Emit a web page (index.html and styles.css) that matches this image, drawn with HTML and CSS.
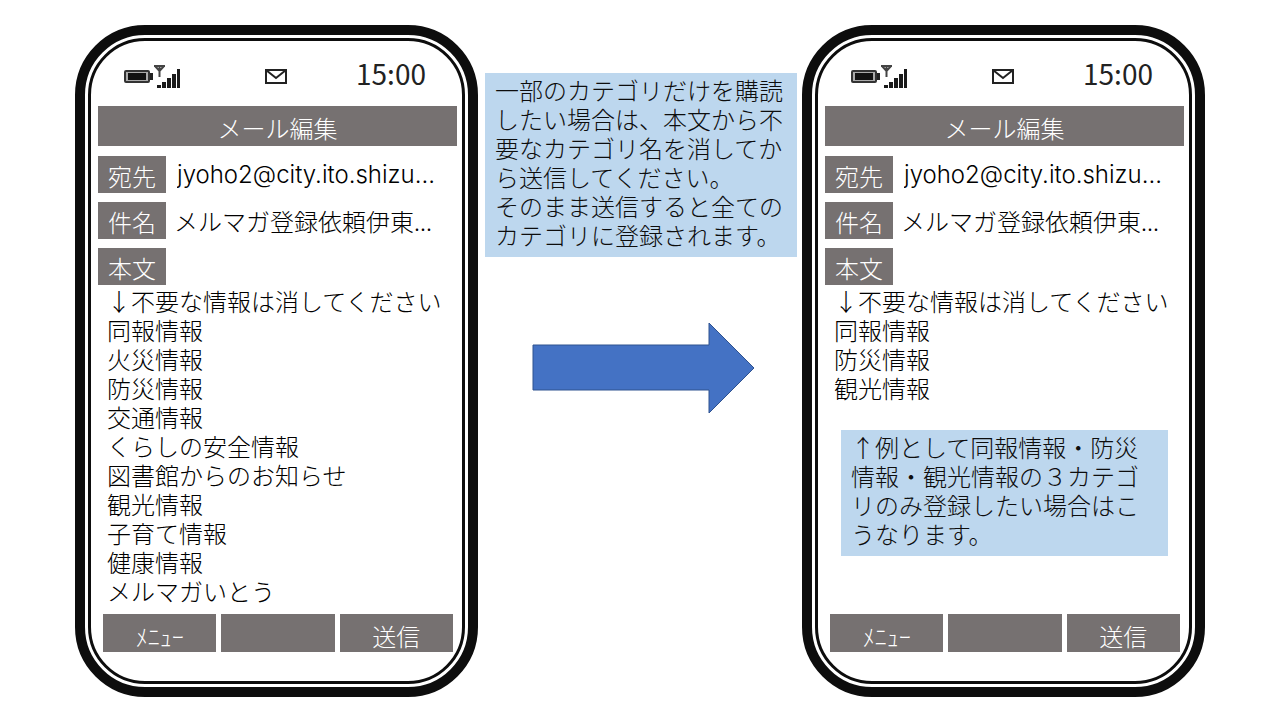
FILE: index.html
```
<!DOCTYPE html>
<html lang="ja">

<head>
    <title>メール編集</title>
    <meta charset="UTF-8" />
    <link rel="stylesheet" href="styles.css">
</head>

<body>
    <!-- icons used by both phones -->
    <svg class="defs" aria-hidden="true">
        <symbol id="signal" viewBox="0 0 57 25">
            <rect x="1" y="7" width="24" height="11" rx="1" fill="#aaa" stroke="#333" stroke-width="2" />
            <rect x="4" y="9" width="18" height="7" fill="#111" />
            <rect x="26" y="9" width="3" height="7" fill="#222" />
            <path d="M30 2h11M31 2l4.500 5 4.500-5M35.500 2v11" fill="none" stroke="#444" stroke-width="2" />
            <path d="M33 21h4v3h-4zM38 18h4v6h-4zM43 14h4v10h-4zM48 10h4v14h-4zM53 5h3v19h-3z" fill="#1a1a1a" />
        </symbol>
        <symbol id="envelope" viewBox="0 0 24 17">
            <path d="M2 2h20v13H2zM2 2l10 8 10-8" fill="none" stroke="#222" stroke-width="2" />
        </symbol>
    </svg>

    <main>
        <section class="phone">
            <form class="screen">
                <div class="status">
                    <svg class="signal"><use href="#signal" /></svg>
                    <svg class="envelope"><use href="#envelope" /></svg>
                    <time>15:00</time>
                </div>
                <h1>メール編集</h1>
                <div class="row">
                    <label for="to1">宛先</label>
                    <input type="text" id="to1" class="latin" value="jyoho2@city.ito.shizu...">
                </div>
                <div class="row">
                    <label for="subject1">件名</label>
                    <input type="text" id="subject1" value="メルマガ登録依頼伊東...">
                </div>
                <div class="row">
                    <label for="body1">本文</label>
                </div>
                <textarea id="body1" rows="11">
↓不要な情報は消してください
同報情報
火災情報
防災情報
交通情報
くらしの安全情報
図書館からのお知らせ
観光情報
子育て情報
健康情報
メルマガいとう</textarea>
                <div class="keys">
                    <button type="button">ﾒﾆｭｰ</button>
                    <button type="button" aria-label="決定"></button>
                    <button type="button">送信</button>
                </div>
            </form>
        </section>

        <section class="middle">
            <p class="note">一部のカテゴリだけを購読したい場合は、本文から不要なカテゴリ名を消してから送信してください。<br>そのまま送信すると全てのカテゴリに登録されます。</p>
            <svg class="arrow" viewBox="0 0 224 92">
                <path d="M1 23H177V1L222 46L177 91V68H1Z" fill="#4472c4" stroke="#2f528f" />
            </svg>
        </section>

        <section class="phone">
            <form class="screen">
                <div class="status">
                    <svg class="signal"><use href="#signal" /></svg>
                    <svg class="envelope"><use href="#envelope" /></svg>
                    <time>15:00</time>
                </div>
                <h1>メール編集</h1>
                <div class="row">
                    <label for="to2">宛先</label>
                    <input type="text" id="to2" class="latin" value="jyoho2@city.ito.shizu...">
                </div>
                <div class="row">
                    <label for="subject2">件名</label>
                    <input type="text" id="subject2" value="メルマガ登録依頼伊東...">
                </div>
                <div class="row">
                    <label for="body2">本文</label>
                </div>
                <textarea id="body2" rows="4">
↓不要な情報は消してください
同報情報
防災情報
観光情報</textarea>
                <p class="note">↑例として同報情報・防災情報・観光情報の３カテゴリのみ登録したい場合はこうなります。</p>
                <div class="keys">
                    <button type="button">ﾒﾆｭｰ</button>
                    <button type="button" aria-label="決定"></button>
                    <button type="button">送信</button>
                </div>
            </form>
        </section>
    </main>
</body>

</html>
```

FILE: styles.css
```
* {
    box-sizing: border-box;
}

body {
    margin: 0;
    background: #fff;
    color: #000;
}

body,
input,
textarea,
button {
    font-family: "Noto Sans CJK JP", sans-serif;
    font-size: 24px;
    font-weight: 300;
    line-height: 29px;
}

.defs {
    display: block;
    width: 0;
    height: 0;
}

main {
    display: grid;
    grid-template-columns: minmax(403px, 1fr) 324px minmax(403px, 1fr);
    max-width: 1280px;
    margin: 0 auto;
    padding: 25px 75px 23px;
}

.phone {
    display: flex;
    min-height: 672px;
    padding: 3px;
    border: 10px solid #0d0d0d;
    border-radius: 70px;
}

.screen {
    display: flex;
    flex: 1;
    flex-direction: column;
    min-width: 0;
    padding: 0 5px 29px 7px;
    border: 3px solid #0d0d0d;
    border-radius: 57px;
}

.status {
    display: flex;
    justify-content: space-between;
    align-items: center;
    height: 65px;
    padding: 5px 31px 0 26px;
}

.signal {
    width: 57px;
    height: 25px;
}

.envelope {
    width: 24px;
    height: 17px;
    margin-left: 14px;
}

time {
    padding-bottom: 6px;
    font-size: 28px;
    font-weight: 400;
    color: #222;
}

h1 {
    height: 40px;
    margin: 0 0 10px;
    padding-top: 7px;
    background: #767171;
    color: #fff;
    font-size: 24px;
    font-weight: 300;
    line-height: 29px;
    text-align: center;
}

.row {
    display: flex;
    gap: 8px;
    margin-bottom: 9px;
}

label {
    height: 37px;
    padding: 5px 10px 0;
    background: #767171;
    color: #fff;
}

input {
    flex: 1;
    min-width: 0;
    height: 37px;
    padding: 0;
    border: 0;
    background: none;
    color: #000;
}

.latin {
    padding-left: 3px;
    font-family: Inter, sans-serif;
}

textarea {
    display: block;
    width: 100%;
    margin-top: -8px;
    padding: 0 0 0 9px;
    border: 0;
    background: none;
    color: #000;
    resize: none;
    overflow: hidden;
}

.note {
    margin: 0;
    padding: 2px 10px 8px;
    background: #bdd7ee;
    color: #0d0d0d;
}

.screen .note {
    margin: 28px 16px 0;
}

.middle .note {
    margin: 48px 5px 65px 7px;
}

.arrow {
    display: block;
    width: 224px;
    height: 92px;
    margin-left: 54px;
}

.keys {
    display: grid;
    grid-template-columns: 1fr 1fr 1fr;
    gap: 5px;
    margin: auto 4px 0 5px;
}

button {
    height: 38px;
    padding: 4px 0 0;
    border: 0;
    background: #767171;
    color: #fff;
}
```
